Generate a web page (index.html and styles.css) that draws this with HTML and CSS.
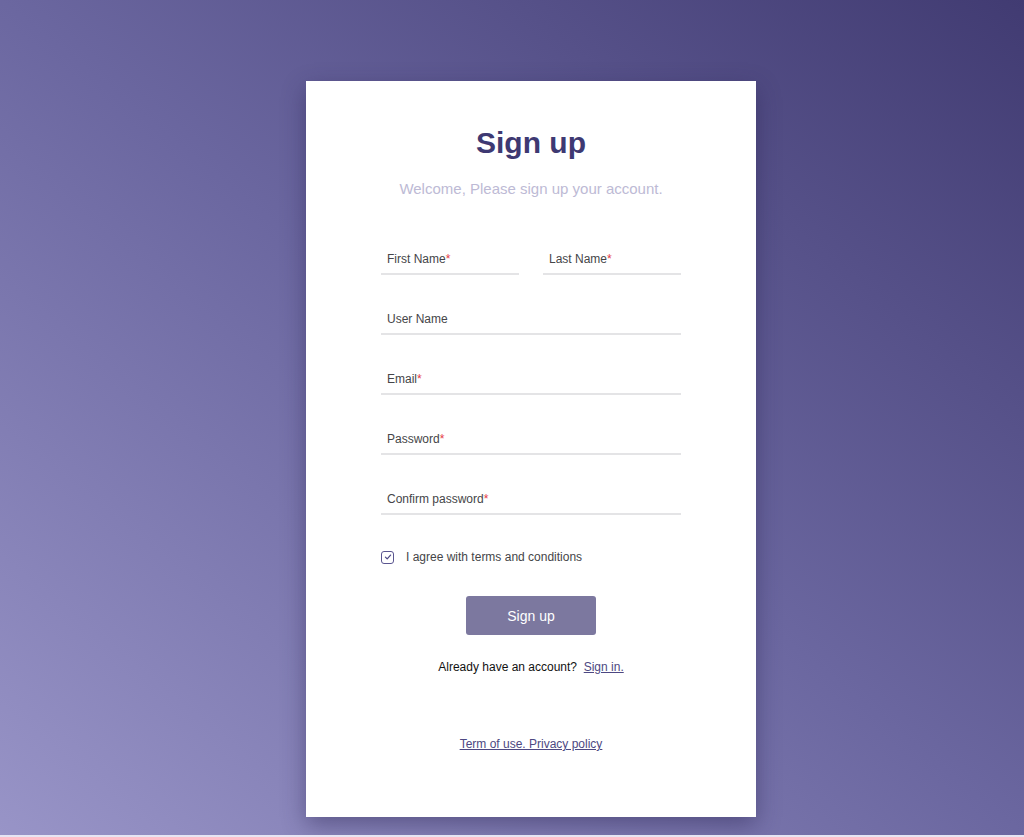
FILE: index.html
```html
<!DOCTYPE html>
<html lang="en">
<head>
<meta charset="utf-8">
<title>Sign up</title>
<link rel="stylesheet" href="styles.css">
</head>
<body>
<div class="page">
  <div class="card">
    <h1 class="title">Sign up</h1>
    <p class="subtitle">Welcome, Please sign up your account.</p>
    <form class="form">
      <div class="row">
        <div class="field"><span class="label">First Name<span class="req">*</span></span></div>
        <div class="field"><span class="label">Last Name<span class="req">*</span></span></div>
      </div>
      <div class="field"><span class="label">User Name</span></div>
      <div class="field"><span class="label">Email<span class="req">*</span></span></div>
      <div class="field"><span class="label">Password<span class="req">*</span></span></div>
      <div class="field"><span class="label">Confirm password<span class="req">*</span></span></div>
      <label class="agree">
        <span class="box"><svg viewBox="0 0 10 10" width="8" height="8"><path d="M1.8 5.2 L4 7.3 L8.2 2.6" fill="none" stroke="#4f4a86" stroke-width="1.6" stroke-linecap="round" stroke-linejoin="round"/></svg></span>
        <span class="agree-text">I agree with terms and conditions</span>
      </label>
      <div class="btn-wrap"><button type="button" class="btn">Sign up</button></div>
      <p class="already">Already have an account?&nbsp; <a href="#" class="link">Sign in.</a></p>
    </form>
    <p class="footer"><a href="#" class="link">Term of use. Privacy policy</a></p>
  </div>
</div>
</body>
</html>
```
FILE: styles.css
```css
html {
  background: #e6e5f3;
}
body {
  margin: 0;
  font-family: "Liberation Sans", Arial, sans-serif;
}
.page {
  height: 835px;
  background: linear-gradient(to top right, #9894c7 0%, #6b67a0 50%, #413b72 100%);
  padding: 81px 0 0 38px;
  box-sizing: border-box;
  overflow: hidden;
}
.card {
  width: 450px;
  margin: 0 auto;
  background: #fff;
  box-sizing: border-box;
  padding: 44px 0 65px;
  box-shadow: 0 8px 22px rgba(40, 34, 80, 0.45);
  text-align: center;
}
.title {
  margin: 0;
  font-size: 30px;
  line-height: 36px;
  font-weight: bold;
  color: #3e3972;
}
.subtitle {
  margin: 18px 0 0;
  font-size: 15px;
  line-height: 20px;
  color: #bdbad5;
}
.form {
  width: 300px;
  margin: 44px auto 0;
  text-align: left;
}
.row {
  display: flex;
  gap: 24px;
}
.row .field {
  flex: 1;
}
.field {
  padding: 8px 6px 6px;
  border-bottom: 2px solid #e4e4e6;
  margin-bottom: 28px;
}
.label {
  display: block;
  font-size: 12px;
  line-height: 16px;
  color: #454548;
}
.req {
  color: #e53946;
}
.agree {
  display: flex;
  align-items: center;
  height: 16px;
  margin-top: 34px;
}
.box {
  width: 11px;
  height: 11px;
  border: 1.5px solid #5a5590;
  border-radius: 3px;
  display: flex;
  align-items: center;
  justify-content: center;
}
.agree-text {
  margin-left: 12px;
  font-size: 12px;
  color: #454548;
}
.btn-wrap {
  display: flex;
  justify-content: center;
  margin-top: 31px;
}
.btn {
  width: 130px;
  height: 39px;
  border: none;
  border-radius: 3px;
  background: #7c789f;
  color: #fff;
  font-family: "Liberation Sans", Arial, sans-serif;
  font-size: 14px;
  padding: 0;
}
.already {
  margin: 24px 0 0;
  text-align: center;
  font-size: 12px;
  line-height: 16px;
  color: #111;
}
.link {
  color: #4d4882;
  text-decoration: underline;
}
.footer {
  margin: 61px 0 0;
  font-size: 12px;
  line-height: 16px;
}
```
